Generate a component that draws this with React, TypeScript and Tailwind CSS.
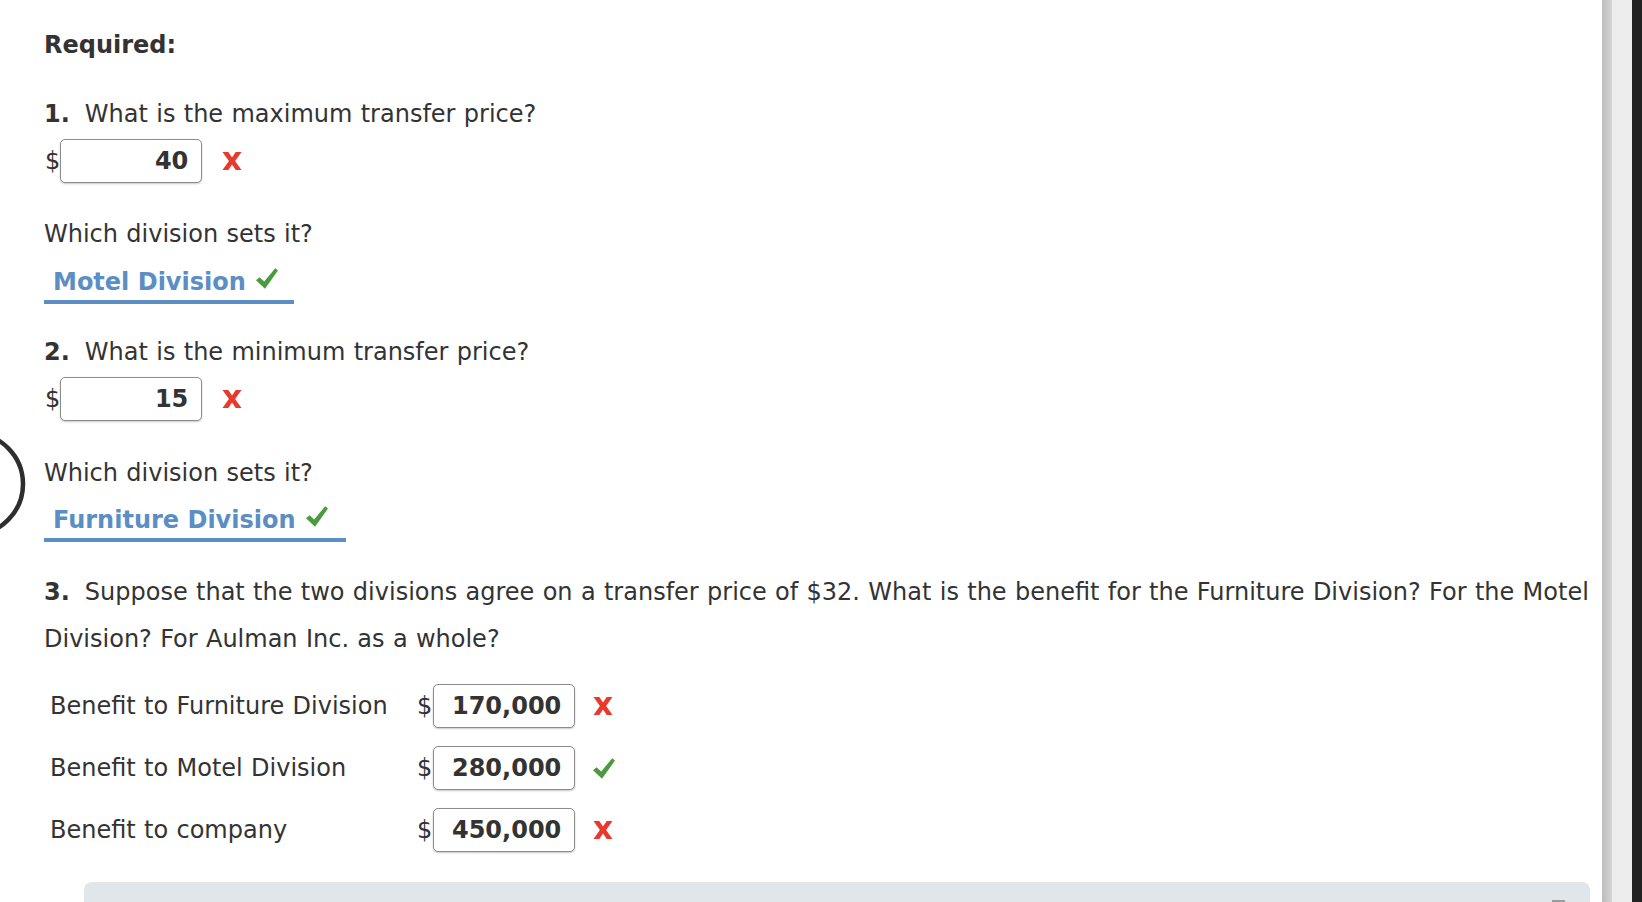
import React from 'react';

const RedX: React.FC = () => (
  <svg width="20" height="18" viewBox="0 0 20 18" className="shrink-0">
    <path
      d="M0.5 0 L6.3 0 L10 5.6 L13.7 0 L19.5 0 L13.1 9 L19.5 18 L13.7 18 L10 12.4 L6.3 18 L0.5 18 L6.9 9 Z"
      fill="#e8392c"
    />
  </svg>
);

const GreenCheck: React.FC = () => (
  <svg width="22" height="21" viewBox="0 0 22 21" className="shrink-0">
    <path d="M0 12.2 L3.6 9.2 L8.2 13.6 L19.2 0.2 L22 2.6 L9 20.8 Z" fill="#4c9a3f" />
  </svg>
);

const AnswerBox: React.FC<{ value: string }> = ({ value }) => (
  <div className="flex h-[44px] w-[142px] items-center justify-end rounded-[5px] border-[1.5px] border-[#8c8c8c] bg-white pr-[13px] font-bold shadow-[0_1px_2px_rgba(0,0,0,0.22)]">
    {value}
  </div>
);

const Question: React.FC<{ num: string; text: string; className?: string }> = ({ num, text, className }) => (
  <p className={`leading-[28px] ${className ?? ''}`}>
    <span className="font-bold">{num}</span>
    <span className="ml-[15px]">{text}</span>
  </p>
);

const DivisionAnswer: React.FC<{ label: string; width: string; className?: string }> = ({ label, width, className }) => (
  <div className={`flex items-start gap-[10px] border-b-4 border-[#5b8ec4] pb-[4px] pl-[9px] ${width} ${className ?? ''}`}>
    <span className="font-bold leading-[28px] text-[#5b8ec4] [word-spacing:0px]">{label}</span>
    <GreenCheck />
  </div>
);

const BenefitRow: React.FC<{ label: string; value: string; ok: boolean; className?: string }> = ({ label, value, ok, className }) => (
  <div className={`flex h-[44px] items-center ${className ?? ''}`}>
    <span className="ml-[6px] w-[367px]">{label}</span>
    <span>$</span>
    <div className="ml-[1px]">
      <AnswerBox value={value} />
    </div>
    <div className="ml-[18px]">{ok ? <GreenCheck /> : <RedX />}</div>
  </div>
);

export default function App() {
  return (
    <div className="flex h-screen w-full overflow-hidden bg-white font-['DejaVu_Sans',Verdana,sans-serif] text-[24px] text-[#333333] [word-spacing:0.7px]">
      <main className="relative flex-1 pl-[44px] pt-[31px]">
        {/* partial ring on the left edge */}
        <svg width="30" height="110" viewBox="0 0 30 110" className="absolute left-0 top-[430px]">
          <circle cx="-27.8" cy="54" r="50.8" stroke="#2e2e2e" strokeWidth="4.5" fill="none" />
        </svg>

        <h2 className="font-bold leading-[28px]">Required:</h2>

        <Question num="1." text="What is the maximum transfer price?" className="mt-[41px]" />
        <div className="mt-[11px] flex h-[44px] items-center">
          <span className="ml-[1px]">$</span>
          <AnswerBox value="40" />
          <div className="ml-[20px]">
            <RedX />
          </div>
        </div>

        <p className="mt-[37px] leading-[28px]">Which division sets it?</p>
        <DivisionAnswer label="Motel Division" width="w-[250px]" className="mt-[20px]" />

        <Question num="2." text="What is the minimum transfer price?" className="mt-[34px]" />
        <div className="mt-[11px] flex h-[44px] items-center">
          <span className="ml-[1px]">$</span>
          <AnswerBox value="15" />
          <div className="ml-[20px]">
            <RedX />
          </div>
        </div>

        <p className="mt-[38px] leading-[28px]">Which division sets it?</p>
        <DivisionAnswer label="Furniture Division" width="w-[302px]" className="mt-[19px]" />

        <p className="mt-[27px] leading-[47px]">
          <span className="font-bold">3.</span>
          <span className="ml-[15px]">
            Suppose that the two divisions agree on a transfer price of $32. What is the benefit for the Furniture Division? For the Motel Division? For Aulman Inc. as a whole?
          </span>
        </p>

        <BenefitRow label="Benefit to Furniture Division" value="170,000" ok={false} className="mt-[21px]" />
        <BenefitRow label="Benefit to Motel Division" value="280,000" ok className="mt-[18px]" />
        <BenefitRow label="Benefit to company" value="450,000" ok={false} className="mt-[18px]" />

        <div className="ml-[40px] mr-[12px] mt-[30px] flex h-[60px] justify-end rounded-t-[8px] bg-[#e1e6ea] pr-[25px] pt-[18px]">
          <div className="h-[10px] w-[13px] bg-[#9b9b9b]" />
        </div>
      </main>
      <div className="w-[10px] shrink-0 bg-gradient-to-r from-[#bdbdbd] to-[#d5d5d5]" />
      <div className="w-[20px] shrink-0 bg-[#ededed]" />
      <div className="w-[10px] shrink-0 bg-[#222222]" />
    </div>
  );
}
